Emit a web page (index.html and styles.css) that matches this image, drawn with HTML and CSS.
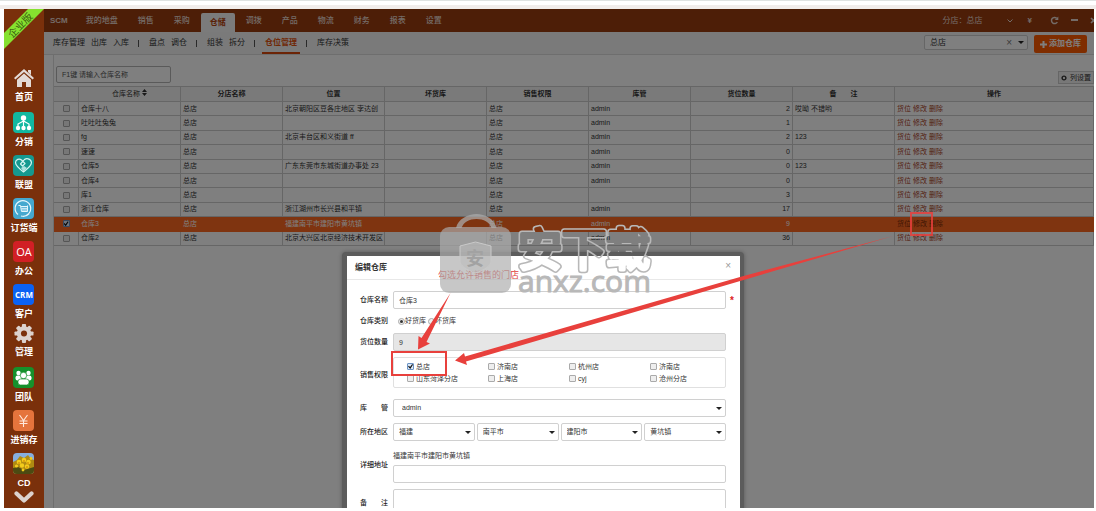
FILE: index.html
```html
<!DOCTYPE html>
<html lang="zh-CN">
<head>
<meta charset="utf-8">
<title>仓位管理</title>
<link rel="stylesheet" href="styles.css">
</head>
<body>
<div class="frame">
  <aside class="sidebar">
    <svg class="ribbon" viewBox="0 0 40 40" aria-label="企业版">
      <polygon points="24,0 40,0 0,40 0,24" fill="#86e22f"/>
      <text x="16" y="20" transform="rotate(-45 16 16)" text-anchor="middle" class="ribbon-text">企业版</text>
    </svg>
    <ul class="apps">
      <li class="app plain"><a href="#home">
        <svg class="glyph" viewBox="0 0 20 19"><path d="M10 0 20 9 18.600 10.600 10 3 1.400 10.600 0 9ZM14 1h3v5l-3-3ZM10 4.500 17 10.700V18h-5v-5H8v5H3v-7.300Z" fill="#e3dad6"/></svg>
        <span>首页</span></a></li>
      <li class="app"><a href="#fx">
        <svg class="tile teal" viewBox="0 0 21 21"><g stroke="#fff" fill="none" stroke-width="1.200"><path d="M10.500 7v9M10.500 9 5 12v4M10.500 9l5.500 3v4"/></g><g fill="#fff"><circle cx="10.500" cy="6" r="2.700"/><circle cx="5" cy="16" r="2.200"/><circle cx="10.500" cy="16" r="2.200"/><circle cx="16" cy="16" r="2.200"/></g></svg>
        <span>分销</span></a></li>
      <li class="app"><a href="#lm">
        <svg class="tile sea" viewBox="0 0 21 21"><path d="M10.500 17C6 13.500 2.500 10.500 2.500 7.500a3.600 3.600 0 0 1 6-2.500L12 8.500 9.500 11 7.500 9l3-3.500a4.500 4.500 0 0 1 8 2c0 3-3.500 6-8 9.500Z" fill="none" stroke="#d6f5f2" stroke-width="1.200" stroke-linejoin="round"/><path d="M8 13l3-2 3 2-3.500 3.500Z" fill="#d6f5f2" opacity=".8"/></svg>
        <span>联盟</span></a></li>
      <li class="app"><a href="#dh">
        <svg class="tile sky" viewBox="0 0 21 21"><path d="M5 16.500A7.800 7.800 0 1 1 8 18M10 18.300a7.800 7.800 0 0 0 6-2.500" fill="none" stroke="#e4f6fc" stroke-width="1.200"/><path d="M5.500 7.500h2l1 6h6M8 8.500h6.500M8.300 10.300h6M8.500 12h5.500M14.500 7.500v6" fill="none" stroke="#e4f6fc"/></svg>
        <span>订货端</span></a></li>
      <li class="app"><a href="#oa"><b class="tile red">OA</b><span>办公</span></a></li>
      <li class="app"><a href="#crm"><b class="tile blue">CRM</b><span>客户</span></a></li>
      <li class="app plain gear"><a href="#gl">
        <svg class="glyph" viewBox="0 0 20 20"><g fill="#dcd2ce"><g id="teeth"><rect x="7.800" y="0" width="4.400" height="20" rx="1"/><rect x="0" y="7.800" width="20" height="4.400" rx="1"/></g><use href="#teeth" transform="rotate(45 10 10)"/><circle cx="10" cy="10" r="7.600"/></g><circle cx="10" cy="10" r="3.200" fill="#7a300b"/></svg>
        <span>管理</span></a></li>
      <li class="app"><a href="#td">
        <svg class="tile green" viewBox="0 0 21 21"><g fill="#fff"><circle cx="5.500" cy="6" r="2.200"/><circle cx="15.500" cy="6" r="2.200"/><rect x="2.500" y="8.500" width="6" height="5" rx="2"/><rect x="12.500" y="8.500" width="6" height="5" rx="2"/></g><g fill="#fff" stroke="#15912c" stroke-width=".7"><circle cx="10.500" cy="8.500" r="3.200"/><rect x="5" y="12" width="11" height="6" rx="2.500"/></g></svg>
        <span>团队</span></a></li>
      <li class="app"><a href="#jxc">
        <svg class="tile orange" viewBox="0 0 21 21"><path d="M6.500 5 10.500 10.500 14.500 5M10.500 10.500V17M6.500 11h8M6.500 13.500h8" fill="none" stroke="#ffe9dc" stroke-width="1.100"/></svg>
        <span>进销存</span></a></li>
      <li class="app"><a href="#cd">
        <svg class="tile photo" viewBox="0 0 21 21"><rect width="21" height="21" fill="#86aede"/><path d="M0 9 4 7 7 3l4 2 4-3 3 4 3 1v14H0Z" fill="#b08a12"/><path d="M0 15l5-1 6 3 10-3v7H0Z" fill="#4c4a12"/><g fill="#f3cc1c"><circle cx="6" cy="9" r="2.300"/><circle cx="11" cy="7" r="2.300"/><circle cx="15.500" cy="9" r="2.300"/><circle cx="9" cy="12.500" r="2.200"/><circle cx="14" cy="13.500" r="2.200"/><circle cx="3.500" cy="13" r="1.600"/><circle cx="18" cy="5.500" r="1.400"/><circle cx="10" cy="17" r="1.400"/></g><g fill="#d9960c"><circle cx="6" cy="10" r="1"/><circle cx="11" cy="8" r="1"/><circle cx="15" cy="10" r="1"/><circle cx="14" cy="14" r="1"/></g></svg>
        <span>CD</span></a></li>
    </ul>
    <button class="more" aria-label="更多"><svg viewBox="0 0 20 13"><path d="M2.500 2.500 10 9.500l7.500-7" fill="none" stroke="#dcd2ce" stroke-width="4.200" stroke-linecap="round" stroke-linejoin="round"/></svg></button>
  </aside>

  <main class="main">
    <header class="topbar">
      <nav class="tabs">
        <a class="tab brand" href="#scm">SCM</a>
        <a class="tab" href="#t1">我的地盘</a>
        <a class="tab" href="#t2">销售</a>
        <a class="tab" href="#t3">采购</a>
        <a class="tab active" href="#t4">仓储</a>
        <a class="tab" href="#t5">调拨</a>
        <a class="tab" href="#t6">产品</a>
        <a class="tab" href="#t7">物流</a>
        <a class="tab" href="#t8">财务</a>
        <a class="tab" href="#t9">报表</a>
        <a class="tab" href="#t10">设置</a>
      </nav>
      <div class="tools">
        <button class="branch">分店：总店<svg width="6" height="4" viewBox="0 0 6 4"><path d="M.5.500 3 3 5.500.500" fill="none" stroke="currentColor"/></svg></button>
        <button class="tool" aria-label="财务">¥</button>
        <button class="tool" aria-label="刷新"><svg width="9" height="9" viewBox="0 0 9 9"><path d="M7.300 6A3.100 3.100 0 1 1 6.700 2.200" fill="none" stroke="currentColor" stroke-width="1.500"/><path d="M8.300.500V4H4.800Z" fill="currentColor"/></svg></button>
        <button class="tool" aria-label="最小化"><svg width="7" height="9" viewBox="0 0 7 9"><path d="M0 4h7" stroke="currentColor" stroke-width="2"/></svg></button>
        <button class="tool" aria-label="关闭"><svg width="6" height="9" viewBox="0 0 6 9"><path d="M1 2l5 5M6 2 1 7" stroke="currentColor" stroke-width="1.600"/></svg></button>
      </div>
    </header>

    <div class="subbar">
      <nav class="subnav">
        <a href="#s1">库存管理</a><a href="#s2">出库</a><a href="#s3">入库</a><i></i>
        <a href="#s4">盘点</a><a href="#s5">调仓</a><i></i>
        <a href="#s6">组装</a><a href="#s7">拆分</a><i></i>
        <a class="current" href="#s8">仓位管理</a><i></i>
        <a href="#s9">库存决策</a>
      </nav>
      <div class="actions">
        <div class="picker">
          <select aria-label="分店"><option>总店</option></select>
          <button class="clear" aria-label="清除">×</button>
        </div>
        <button class="add"><svg width="7" height="7" viewBox="0 0 7 7"><path d="M3.500 0v7M0 3.500h7" stroke="currentColor" stroke-width="2"/></svg>添加仓库</button>
      </div>
    </div>

    <section class="content">
      <div class="filter">
        <input class="search" type="text" placeholder="F1键 请输入仓库名称" aria-label="仓库名称搜索">
        <button class="columns"><svg width="6" height="6" viewBox="0 0 6 6"><circle cx="3" cy="3" r="1.900" fill="none" stroke="currentColor" stroke-width="1.400"/></svg>列设置</button>
      </div>
      <table class="grid">
        <colgroup><col class="c-check"><col class="c"><col class="c"><col class="c"><col class="c"><col class="c"><col class="c"><col class="c"><col class="c"><col></colgroup>
        <thead><tr><th></th><th class="sort">仓库名称 <svg width="5" height="7" viewBox="0 0 5 7"><path d="M2.500 0 5 3H0ZM0 4h5L2.500 7Z" fill="currentColor"/></svg></th><th>分店名称</th><th>位置</th><th>坏货库</th><th>销售权限</th><th>库管</th><th>货位数量</th><th>备&emsp;&emsp;注</th><th>操作</th></tr></thead>
        <tbody>
          <tr><td><input type="checkbox" aria-label="仓库十八"></td><td>仓库十八</td><td>总店</td><td>北京朝阳区豆各庄地区 孛达创</td><td></td><td>总店</td><td>admin</td><td class="num">2</td><td>哎呦 不错哟</td><td><a href="#p">货位</a> <a href="#e">修改</a> <a href="#d">删除</a></td></tr>
          <tr><td><input type="checkbox" aria-label="吐吐吐兔兔"></td><td>吐吐吐兔兔</td><td>总店</td><td></td><td></td><td>总店</td><td>admin</td><td class="num">1</td><td></td><td><a href="#p">货位</a> <a href="#e">修改</a> <a href="#d">删除</a></td></tr>
          <tr><td><input type="checkbox" aria-label="fg"></td><td>fg</td><td>总店</td><td>北京丰台区和义街道 ff</td><td></td><td>总店</td><td>admin</td><td class="num">2</td><td>123</td><td><a href="#p">货位</a> <a href="#e">修改</a> <a href="#d">删除</a></td></tr>
          <tr><td><input type="checkbox" aria-label="速速"></td><td>速速</td><td>总店</td><td></td><td></td><td>总店</td><td>admin</td><td class="num">0</td><td></td><td><a href="#p">货位</a> <a href="#e">修改</a> <a href="#d">删除</a></td></tr>
          <tr><td><input type="checkbox" aria-label="仓库5"></td><td>仓库5</td><td>总店</td><td>广东东莞市东城街道办事处 23</td><td></td><td>总店</td><td>admin</td><td class="num">0</td><td>123</td><td><a href="#p">货位</a> <a href="#e">修改</a> <a href="#d">删除</a></td></tr>
          <tr><td><input type="checkbox" aria-label="仓库4"></td><td>仓库4</td><td>总店</td><td></td><td></td><td>总店</td><td>admin</td><td class="num">0</td><td></td><td><a href="#p">货位</a> <a href="#e">修改</a> <a href="#d">删除</a></td></tr>
          <tr><td><input type="checkbox" aria-label="库1"></td><td>库1</td><td>总店</td><td></td><td></td><td>总店</td><td></td><td class="num">3</td><td></td><td><a href="#p">货位</a> <a href="#e">修改</a> <a href="#d">删除</a></td></tr>
          <tr><td><input type="checkbox" aria-label="浙江仓库"></td><td>浙江仓库</td><td>总店</td><td>浙江湖州市长兴县和平镇</td><td></td><td>总店</td><td>admin</td><td class="num">17</td><td></td><td><a href="#p">货位</a> <a href="#e">修改</a> <a href="#d">删除</a></td></tr>
          <tr class="selected"><td><input type="checkbox" aria-label="仓库3" checked></td><td>仓库3</td><td>总店</td><td>福建南平市建阳市黄坑镇</td><td></td><td>总店</td><td>admin</td><td class="num">9</td><td></td><td><a href="#p">货位</a> <a href="#e">修改</a> <a href="#d">删除</a></td></tr>
          <tr><td><input type="checkbox" aria-label="仓库2"></td><td>仓库2</td><td>总店</td><td>北京大兴区北京经济技术开发区</td><td></td><td>总店</td><td>admin</td><td class="num">36</td><td></td><td><a href="#p">货位</a> <a href="#e">修改</a> <a href="#d">删除</a></td></tr>
        </tbody>
      </table>
    </section>

    <div class="backdrop">
      <form class="modal" role="dialog" aria-labelledby="dlg-title">
        <div class="modal-head"><h2 id="dlg-title">编辑仓库</h2><button type="button" class="close" aria-label="关闭">×</button></div>
        <div class="fields">
          <label class="label" for="name">仓库名称</label>
          <div class="field required"><input class="box" id="name" type="text" value="仓库3"></div>

          <span class="label">仓库类别</span>
          <div class="field radios">
            <label><input type="radio" name="kind" checked>好货库</label>
            <label><input type="radio" name="kind">坏货库</label>
          </div>

          <label class="label" for="count">货位数量</label>
          <div class="field"><input class="box" id="count" type="text" value="9" readonly></div>

          <span class="label">销售权限</span>
          <div class="field shops">
            <label><input type="checkbox" checked>总店</label>
            <label><input type="checkbox">济南店</label>
            <label><input type="checkbox">杭州店</label>
            <label><input type="checkbox">济南店</label>
            <label><input type="checkbox">山东菏泽分店</label>
            <label><input type="checkbox">上海店</label>
            <label><input type="checkbox">cyj</label>
            <label><input type="checkbox">沧州分店</label>
          </div>

          <label class="label wide" for="keeper"><span>库</span><span>管</span></label>
          <div class="field caret keeper"><select class="box" id="keeper"><option>admin</option></select></div>

          <span class="label">所在地区</span>
          <div class="field region">
            <div class="caret"><select class="box" aria-label="省"><option>福建</option></select></div>
            <div class="caret"><select class="box" aria-label="市"><option>南平市</option></select></div>
            <div class="caret"><select class="box" aria-label="县"><option>建阳市</option></select></div>
            <div class="caret"><select class="box" aria-label="镇"><option>黄坑镇</option></select></div>
          </div>

          <label class="label" for="addr">详细地址</label>
          <div class="field address"><p>福建南平市建阳市黄坑镇</p><input class="box" id="addr" type="text"></div>

          <label class="label wide top" for="note"><span>备</span><span>注</span></label>
          <div class="field"><textarea class="box note" id="note"></textarea></div>
        </div>
      </form>
    </div>
  </main>

  <svg class="marks" width="1096" height="511" viewBox="0 0 1096 511">
    <defs>
      <mask id="outline" maskUnits="userSpaceOnUse" x="505" y="215" width="160" height="70">
        <g class="mark-title" stroke-linejoin="round">
          <text x="518" y="266" fill="#fff" stroke="#fff" stroke-width="7">安下载</text>
          <text x="518" y="266" fill="#000" stroke="#000" stroke-width="4">安下载</text>
        </g>
      </mask>
    </defs>
    <text class="hint" x="438" y="278">勾选允许销售的门店</text>
    <g fill="none" stroke="#e8403c" stroke-width="2">
      <rect x="392" y="352" width="54" height="23"/>
      <rect x="911" y="213" width="21" height="22" opacity=".85"/>
    </g>
    <g fill="#e8403c">
      <path d="M450.500 293 426.500 342 430 343.500 418 349.500 418.500 336 421.500 338Z"/>
      <path d="M893 236 466 361.500 467 365 455 360.500 464 353 465 356.500 740 277Z"/>
    </g>
    <g class="watermark">
      <path d="M456 228c2-9 12-14 20.500-14s18 5 20 14h-5c-2-6-8-9-15-9s-13 3-15 9Z" fill="#aaa" fill-opacity=".75"/>
      <rect x="440" y="227" width="71" height="66" rx="9" fill="#acacac" fill-opacity=".68"/>
      <path d="M460 246 475.500 242 491 246v15c0 5-7 9-15.500 12-8.500-3-15.500-7-15.500-12Z" fill="#bcbcbc" fill-opacity=".6" stroke="#c9c9c9"/>
      <text x="475" y="265" text-anchor="middle" class="mark-seal">安</text>
      <rect x="505" y="215" width="160" height="70" fill="#b8b8b8" mask="url(#outline)"/>
      <text x="518" y="292" class="mark-site">anxz.com</text>
    </g>
  </svg>
</div>
</body>
</html>
```

FILE: styles.css
```css
* { box-sizing: border-box; }

html, body { height: 100%; margin: 0; }

body {
  font: 7px/12px "Liberation Sans", "Noto Sans CJK SC", sans-serif;
  color: #333;
  background: #fff;
  overflow: hidden;
}

a { color: inherit; text-decoration: none; }
button, input, select, textarea { font: inherit; color: inherit; margin: 0; }
button { border: 0; padding: 0; background: none; }

.frame {
  position: relative;
  display: flex;
  height: 100vh;
  padding: 8px 2px 3px 4px;
  border-top: 1px solid #dfe3e2;
  background: linear-gradient(#fff 4px, #f1edeb 4px, #f1edeb 8px, #fff 8px);
}

/* sidebar */
.sidebar {
  position: relative;
  display: flex;
  flex-direction: column;
  align-items: center;
  flex: 0 0 40px;
  padding-top: 60px;
  background: #7a300b;
  overflow: hidden;
}

.ribbon { position: absolute; left: 0; top: 0; width: 40px; height: 40px; }
.ribbon-text { font-size: 10px; fill: #39590f; }

.apps {
  display: flex;
  flex-direction: column;
  gap: 7px;
  margin: 0;
  padding: 0;
  list-style: none;
}
.app a { display: flex; flex-direction: column; align-items: center; gap: 3px; }
.app span { font-size: 9px; font-weight: bold; color: #fff; white-space: nowrap; }
.plain { margin-bottom: 2px; }
.gear { margin-top: -3px; }
.glyph { width: 20px; height: 19px; }
.tile {
  width: 21px;
  height: 21px;
  border-radius: 4px;
  color: #fff;
  text-align: center;
  overflow: hidden;
}
.teal { background: #12b8a0; }
.sea { background: #159990; }
.sky { background: #45a8cf; }
.red { background: #d11f25; font: 11px/21px "Open Sans", sans-serif; }
.blue { background: #0b62f4; font: bold 8px/21px "Open Sans", sans-serif; }
.green { background: #15912c; }
.orange { background: #e5743c; }
.more { margin-top: 2px; line-height: 0; }
.more svg { width: 20px; height: 13px; }

/* main column */
.main {
  position: relative;
  display: flex;
  flex-direction: column;
  flex: 1;
  min-width: 0;
  background: #fff;
  overflow: hidden;
}

.topbar {
  display: flex;
  justify-content: space-between;
  flex: 0 0 23px;
  background: #9a3c0e;
  color: #e8d8d0;
  font-size: 8px;
}
.tabs { display: flex; align-items: flex-end; padding-left: 5px; }
.tab { margin-right: 2px; padding: 0 9px 3px; line-height: 17px; font-weight: 500; }
.tab.brand { padding: 0 7px 3px 1px; font-weight: bold; }
.tab.active {
  line-height: 19px;
  padding-bottom: 0;
  border-radius: 2px 2px 0 0;
  background: #f6f6f6;
  color: #b5400a;
  font-weight: bold;
}
.tools { display: flex; align-items: center; gap: 12px; margin-right: -2px; }
.tools svg { display: block; }
.branch { display: flex; align-items: center; gap: 24px; margin-right: 3px; }
.tool { font-weight: bold; }
.tool:nth-child(2) { margin-right: 6px; }

.subbar {
  display: flex;
  justify-content: space-between;
  flex: 0 0 23px;
  padding: 0 7px 0 6px;
  border-bottom: 1px solid #dcdcdc;
  background: #f5f5f5;
  font-size: 8px;
}
.subnav { display: flex; }
.subnav a { padding: 1px 3px 0; line-height: 20px; white-space: nowrap; }
.subnav i { width: 1px; height: 7px; margin: 8px 7px 0 6px; background: #555; }
.subnav .current { color: #e0500c; font-weight: bold; border-bottom: 2px solid #d8480c; line-height: 19px; }
.actions { display: flex; align-items: flex-start; gap: 6px; padding-top: 3px; }
.picker { position: relative; width: 104px; }
.picker select {
  display: block;
  width: 100%;
  height: 15px;
  padding: 0 5px;
  border: 1px solid #ccc;
  border-radius: 2px;
  background: #fff;
  appearance: none;
}
.picker::after, .caret::after {
  content: "";
  position: absolute;
  right: 4px;
  top: 50%;
  margin-top: -1px;
  border: 3px solid transparent;
  border-top-color: #222;
  border-bottom: 0;
  pointer-events: none;
}
.picker::after { top: 7px; }
.clear { position: absolute; right: 16px; top: 2px; color: #777; font-size: 10px; }
.add {
  display: flex;
  align-items: center;
  gap: 2px;
  height: 18px;
  padding: 0 6px;
  border-radius: 2px;
  background: #ff5a00;
  color: #fff;
  font-weight: bold;
}

.content {
  flex: 1;
  margin-left: 9px;
  border-left: 1px solid #ddd;
}
.filter { display: flex; justify-content: space-between; height: 31px; padding: 11px 0 0 2px; }
.search {
  width: 115px;
  height: 17px;
  padding: 0 5px;
  border: 1px solid #b5b5b5;
  border-radius: 2px;
  background: #fff;
}
.search::placeholder { color: #555; }
.columns {
  display: flex;
  align-items: center;
  gap: 3px;
  height: 13px;
  margin-top: 5px;
  padding: 0 2px;
  border: 1px solid #ccc;
  background: #f0f0f0;
}

.grid {
  width: 100%;
  height: 160px;
  table-layout: fixed;
  border-collapse: separate;
  border-spacing: 0;
}
.c-check { width: 25px; }
.c { width: 102px; }
.grid th {
  height: 16px;
  padding: 0;
  border: solid #ccc;
  border-width: 1px 1px 1px 0;
  background: #f5f5f5;
  font-weight: bold;
}
.grid .sort { font-weight: normal; }
.grid td {
  padding: 0 2px;
  border: solid #ccc;
  border-width: 0 1px 1px 0;
  white-space: nowrap;
  overflow: hidden;
}
.grid td:first-child { text-align: center; }
.grid .num { text-align: right; }
.grid td a { color: #a8401c; }
.grid .selected td { background: #ff6820; border-color: #ff6820; color: #fff; }
.grid .selected td a { color: #7a2a08; }

/* tick boxes and radios */
input[type="checkbox"], input[type="radio"] {
  appearance: none;
  width: 7px;
  height: 7px;
  border: 1px solid #aaa;
  border-radius: 1px;
  background: #eee;
}
.grid input { display: block; margin: 0 auto; }
input[type="radio"] { border-radius: 50%; }
input[type="checkbox"]:checked { border-color: #6b93c4; background: #dce9f8; }
input[type="checkbox"]:checked::before {
  content: "";
  display: block;
  width: 5px;
  height: 5px;
  background: #111;
  clip-path: polygon(0 50%, 20% 35%, 40% 60%, 85% 0, 100% 15%, 45% 100%);
}
input[type="radio"]:checked::before {
  content: "";
  display: block;
  width: 3px;
  height: 3px;
  margin: 1px;
  border-radius: 50%;
  background: #333;
}

/* dialog */
.backdrop {
  position: absolute;
  inset: 0;
  display: flex;
  justify-content: center;
  align-items: flex-start;
  padding: 243px 52px 0 0;
  background: rgba(0, 0, 0, .5);
}
.modal {
  width: 402px;
  border: 4px solid #5c5c5c;
  border-width: 4px 4px 4px 5px;
  border-radius: 4px;
  background: #fff;
  box-shadow: 0 0 4px rgba(0, 0, 0, .3);
}
.modal-head {
  display: flex;
  justify-content: space-between;
  align-items: center;
  height: 24px;
  padding: 0 9px 0 8px;
  border-bottom: 1px solid #e8e8e8;
}
.modal-head h2 { margin: 0; font-size: 8px; }
.close { font-size: 10px; color: #999; padding-bottom: 3px; }

.fields {
  display: grid;
  grid-template-columns: 28px minmax(0, 1fr);
  column-gap: 5px;
  row-gap: 6px;
  align-items: center;
  padding: 11px 14px 40px 13px;
}
.label { color: #222; font-weight: 500; white-space: nowrap; }
.wide { display: flex; justify-content: space-between; }
.top { align-self: start; padding-top: 8px; }
.box {
  display: block;
  width: 100%;
  height: 18px;
  padding: 0 5px;
  border: 1px solid #d0d0d0;
  border-radius: 2px;
  background: #fff;
}
.box[readonly] { background: #e6e6e6; }
.required { position: relative; }
.required::after {
  content: "*";
  position: absolute;
  right: -8px;
  top: 4px;
  color: #d22;
  font-size: 10px;
  font-weight: bold;
}
.radios { display: flex; gap: 2px; padding-left: 5px; }
.radios label, .shops label { display: flex; align-items: center; white-space: nowrap; }
.shops label { gap: 2px; }
.shops {
  display: grid;
  grid-template-columns: repeat(3, 81px) 1fr;
  align-content: center;
  height: 31px;
  margin-bottom: 5px;
  padding-left: 13px;
  border: 1px solid #e0e0e0;
  border-radius: 2px;
}
.caret { position: relative; }
.caret select { appearance: none; }
.keeper .box { padding-left: 8px; }
.region { display: grid; grid-template-columns: repeat(4, 1fr); gap: 2px; }
.address p { margin: 0 0 3px; }
.address { padding-top: 3px; }
.note { height: 50px; resize: none; }

/* annotations over the whole window */
.marks { position: absolute; left: 0; top: -1px; pointer-events: none; }
.hint { font-size: 9px; fill: #e0403c; }
.mark-title { font-size: 44px; font-family: "Noto Sans CJK SC", sans-serif; }
.mark-seal { font-size: 18px; font-weight: bold; fill: #a2a2a2; }
.mark-site { font: 30px "Open Sans", sans-serif; fill: #b8b8b8; stroke: #b8b8b8; stroke-width: 1px; }
```
